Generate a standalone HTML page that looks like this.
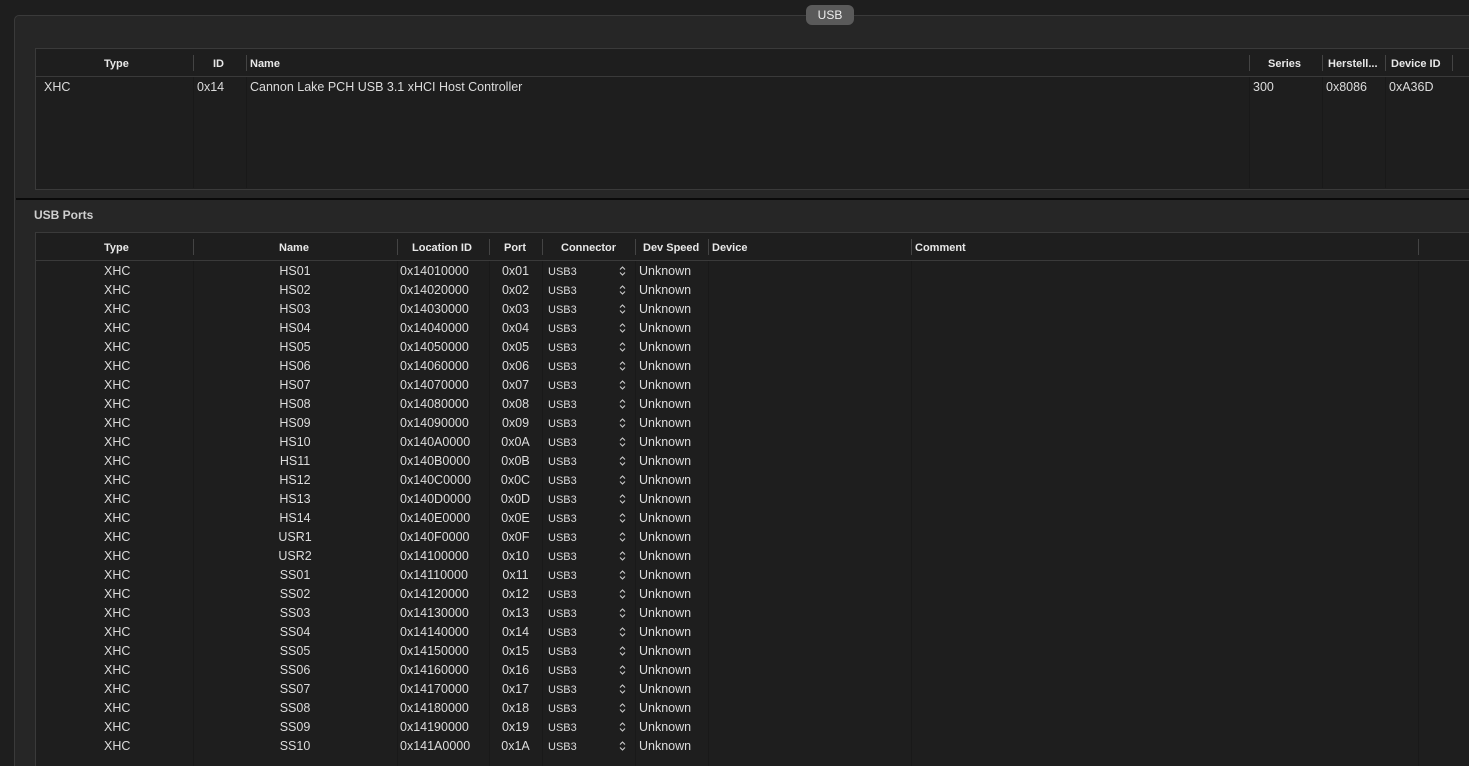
<!DOCTYPE html><html><head><style>
html,body{margin:0;width:1469px;height:766px;overflow:hidden}
body{background:#1e1e1e;font-family:"Liberation Sans",sans-serif;font-size:12.5px;color:#dcdcdc;position:relative}
.a{position:absolute}
.h{font-weight:bold;color:#e8e8e8;font-size:11px}
.sep{position:absolute;width:1px;height:16px;background:#444}
.vl{position:absolute;width:1px;background:#191919}
.t{position:absolute;white-space:nowrap}
</style></head><body>
<div class="a" style="left:14px;top:15px;width:1460px;height:760px;background:#262626;border:1px solid #3a3a3a;border-radius:5px"></div>
<div class="a" style="left:806px;top:5px;width:48px;height:20px;background:#5a5a5a;border-radius:6px;color:#eee;text-align:center;line-height:20px;font-size:12px">USB</div>
<div class="a" style="left:35px;top:48px;width:1440px;height:140px;background:#1e1e1e;border:1px solid #3a3a3a"></div>
<div class="a" style="left:36px;top:76px;width:1440px;height:1px;background:#3a3a3a"></div>
<div class="sep" style="left:193px;top:55px"></div><div class="sep" style="left:246px;top:55px"></div><div class="sep" style="left:1249px;top:55px"></div><div class="sep" style="left:1322px;top:55px"></div><div class="sep" style="left:1385px;top:55px"></div><div class="sep" style="left:1452px;top:55px"></div>
<div class="vl" style="left:193px;top:77px;height:111px"></div><div class="vl" style="left:246px;top:77px;height:111px"></div><div class="vl" style="left:1249px;top:77px;height:111px"></div><div class="vl" style="left:1322px;top:77px;height:111px"></div><div class="vl" style="left:1385px;top:77px;height:111px"></div>
<div class="t h" style="left:104px;top:58px">Type</div><div class="t h" style="left:213px;top:58px">ID</div><div class="t h" style="left:250px;top:58px">Name</div><div class="t h" style="left:1268px;top:58px">Series</div><div class="t h" style="left:1328px;top:58px">Herstell...</div><div class="t h" style="left:1391px;top:58px">Device ID</div>
<div class="t" style="left:44px;top:80px">XHC</div><div class="t" style="left:197px;top:80px">0x14</div><div class="t" style="left:250px;top:80px">Cannon Lake PCH USB 3.1 xHCI Host Controller</div><div class="t" style="left:1253px;top:80px">300</div><div class="t" style="left:1326px;top:80px">0x8086</div><div class="t" style="left:1389px;top:80px">0xA36D</div>
<div class="a" style="left:16px;top:198px;width:1460px;height:2px;background:#0a0a0a"></div>
<div class="t" style="left:34px;top:208px;font-weight:bold;color:#cfcfcf;font-size:12px">USB Ports</div>
<div class="a" style="left:35px;top:232px;width:1440px;height:540px;background:#1e1e1e;border:1px solid #3a3a3a"></div>
<div class="a" style="left:36px;top:260px;width:1440px;height:1px;background:#3a3a3a"></div>
<div class="sep" style="left:193px;top:239px"></div><div class="sep" style="left:397px;top:239px"></div><div class="sep" style="left:489px;top:239px"></div><div class="sep" style="left:542px;top:239px"></div><div class="sep" style="left:635px;top:239px"></div><div class="sep" style="left:708px;top:239px"></div><div class="sep" style="left:911px;top:239px"></div><div class="sep" style="left:1418px;top:239px"></div>
<div class="vl" style="left:193px;top:261px;height:505px"></div><div class="vl" style="left:397px;top:261px;height:505px"></div><div class="vl" style="left:489px;top:261px;height:505px"></div><div class="vl" style="left:542px;top:261px;height:505px"></div><div class="vl" style="left:635px;top:261px;height:505px"></div><div class="vl" style="left:708px;top:261px;height:505px"></div><div class="vl" style="left:911px;top:261px;height:505px"></div><div class="vl" style="left:1418px;top:261px;height:505px"></div>
<div class="t h" style="left:104px;top:242px">Type</div><div class="t h" style="left:279px;top:242px">Name</div><div class="t h" style="left:412px;top:242px">Location ID</div><div class="t h" style="left:504px;top:242px">Port</div><div class="t h" style="left:561px;top:242px">Connector</div><div class="t h" style="left:643px;top:242px">Dev Speed</div><div class="t h" style="left:712px;top:242px">Device</div><div class="t h" style="left:915px;top:242px">Comment</div>
<div id="rows"></div>
<script>
var n=["HS01","HS02","HS03","HS04","HS05","HS06","HS07","HS08","HS09","HS10","HS11","HS12","HS13","HS14","USR1","USR2","SS01","SS02","SS03","SS04","SS05","SS06","SS07","SS08","SS09","SS10"];
var h="";
for(var i=0;i<26;i++){var y=264+i*19;var k=(i+1).toString(16).toUpperCase();if(k.length<2)k="0"+k;var loc="0x14"+k+"0000";
h+='<div class="t" style="left:104px;top:'+y+'px">XHC</div><div class="t" style="left:193px;width:204px;text-align:center;top:'+y+'px">'+n[i]+'</div><div class="t" style="left:400px;top:'+y+'px">'+loc+'</div><div class="t" style="left:489px;width:53px;text-align:center;top:'+y+'px">0x'+k+'</div><div class="t" style="left:548px;top:'+(y+2)+'px;font-size:11px">USB3</div><svg class="a" style="left:619px;top:'+(y+1)+'px" width="7" height="12" viewBox="0 0 7 12"><path d="M1 4.5L3.5 2L6 4.5M1 7.5L3.5 10L6 7.5" fill="none" stroke="#ccc" stroke-width="1.1"/></svg><div class="t" style="left:639px;top:'+y+'px">Unknown</div>';}
document.getElementById("rows").innerHTML=h;
</script>
</body></html>
